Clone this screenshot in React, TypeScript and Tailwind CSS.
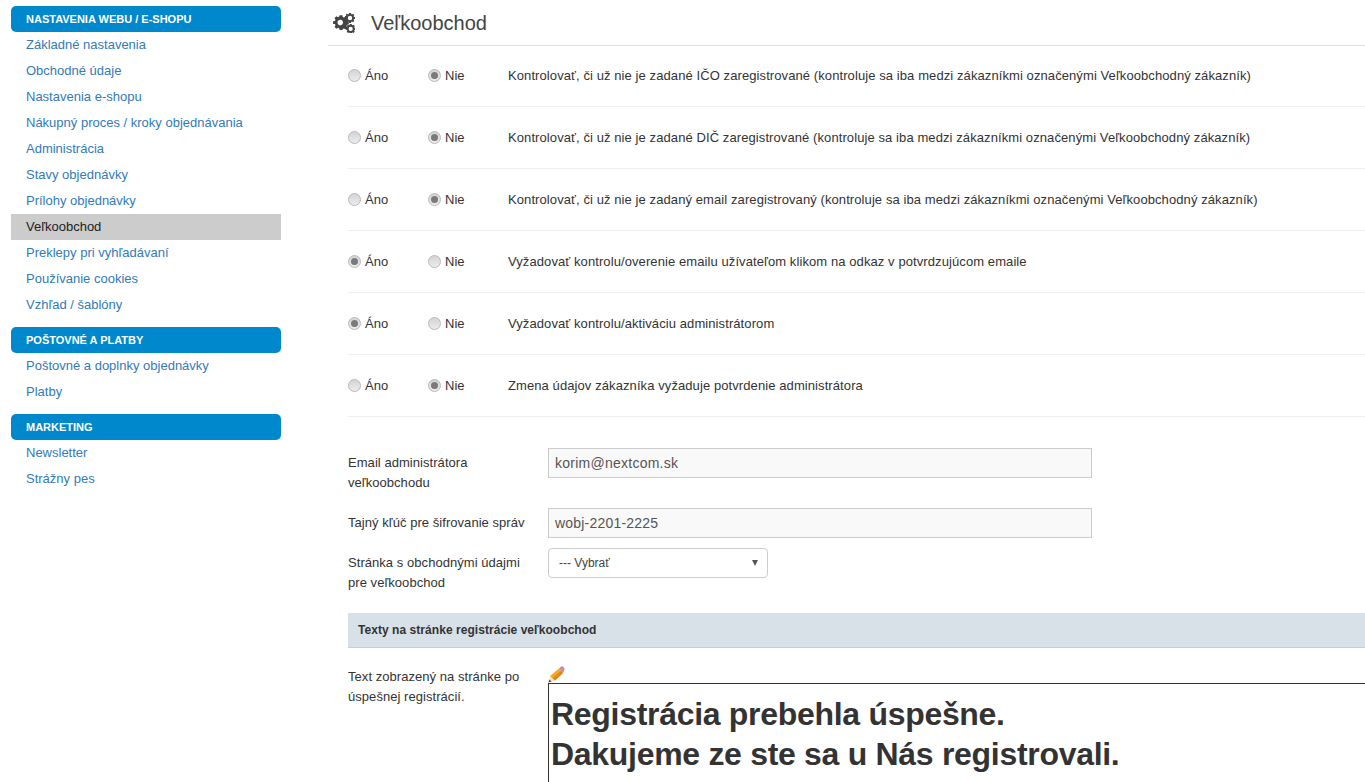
import React from "react";

const groups = [
  {
    title: "NASTAVENIA WEBU / E-SHOPU",
    items: [
      "Základné nastavenia",
      "Obchodné údaje",
      "Nastavenia e-shopu",
      "Nákupný proces / kroky objednávania",
      "Administrácia",
      "Stavy objednávky",
      "Prílohy objednávky",
      "Veľkoobchod",
      "Preklepy pri vyhľadávaní",
      "Používanie cookies",
      "Vzhľad / šablóny",
    ],
  },
  { title: "POŠTOVNÉ A PLATBY", items: ["Poštovné a doplnky objednávky", "Platby"] },
  { title: "MARKETING", items: ["Newsletter", "Strážny pes"] },
];

const rows = [
  { yes: false, text: "Kontrolovať, či už nie je zadané IČO zaregistrované (kontroluje sa iba medzi zákazníkmi označenými Veľkoobchodný zákazník)" },
  { yes: false, text: "Kontrolovať, či už nie je zadané DIČ zaregistrované (kontroluje sa iba medzi zákazníkmi označenými Veľkoobchodný zákazník)" },
  { yes: false, text: "Kontrolovať, či už nie je zadaný email zaregistrovaný (kontroluje sa iba medzi zákazníkmi označenými Veľkoobchodný zákazník)" },
  { yes: true, text: "Vyžadovať kontrolu/overenie emailu užívateľom klikom na odkaz v potvrdzujúcom emaile" },
  { yes: true, text: "Vyžadovať kontrolu/aktiváciu administrátorom" },
  { yes: false, text: "Zmena údajov zákazníka vyžaduje potvrdenie administrátora" },
];

function Radio({ on }: { on: boolean }) {
  return (
    <span className="w-[13px] h-[13px] rounded-full border border-[#b8b8b8] bg-gradient-to-b from-[#d4d4d4] to-[#ececec] flex items-center justify-center shrink-0">
      {on && <span className="w-[7px] h-[7px] rounded-full bg-[#7a7a7a]" />}
    </span>
  );
}

function Gears() {
  return (
    <svg width="22" height="20" viewBox="0 0 22 20" fill="#444444">
      <path
        fillRule="evenodd"
        d="M6 4h3l.4 1.9 1.3.6 1.7-1 2 2-1 1.7.6 1.4 1.9.4v2.9l-1.9.4-.6 1.4 1 1.7-2 2-1.7-1-1.3.5L9 20H6l-.4-1.9-1.3-.5-1.7 1-2-2 1-1.7-.6-1.4L-1 13.500V10.600l2-.4.6-1.4-1-1.700 2-2 1.700 1 1.300-.6zM7.500 9a3 3 0 100 5.800 3 3 0 000-5.800z"
        transform="translate(1 -1.500) scale(.93)"
      />
      <path
        fillRule="evenodd"
        d="M16 0h2l.2 1.100.8.300 1-.6 1.300 1.300-.6 1 .3.800 1 .2v1.800l-1 .2-.3.800.6 1-1.300 1.300-1-.6-.8.300-.2 1.100h-2l-.2-1.100-.8-.3-1 .6-1.300-1.300.6-1-.3-.8-1-.2V3.100l1-.2.3-.8-.6-1L14 .8l1 .6.800-.3zM17 2.800a2.200 2.200 0 100 4.400 2.200 2.200 0 000-4.400z"
      />
      <path
        fillRule="evenodd"
        d="M16.800 11h1.900l.2 1 .8.300.9-.5 1.200 1.300-.6.900.3.800 1 .2v1.700l-1 .2-.3.800.6.900-1.200 1.300-.9-.5-.8.300-.2 1H16.800l-.2-1-.8-.3-.9.5-1.200-1.300.6-.9-.3-.8-1-.2V15l1-.2.3-.8-.6-.9 1.200-1.300.9.500.8-.3zM17.700 13.800a2.100 2.100 0 100 4.200 2.100 2.100 0 000-4.200z"
      />
    </svg>
  );
}

function Pencil() {
  return (
    <svg width="17" height="17" viewBox="0 0 17 17">
      <path d="M0.500 16.500l1.500-6.500 5 4.500z" fill="#f6e6c4" />
      <path d="M0.500 16.500l.7-3 2.500 2z" fill="#555555" />
      <path d="M2 10L11 2.500l4 4.500L7 14.500z" fill="#f7a823" />
      <path d="M4.500 12.300L13 4.800l2 2.200L7 14.500z" fill="#e08a14" />
      <path d="M11 2.500L13 .6c.8-.5 1.500-.4 2.200.2l1 1.100c.6.7.6 1.400.1 2.100L15 7z" fill="#c98aa4" />
    </svg>
  );
}

export default function App() {
  return (
    <div className="h-[782px] overflow-hidden flex bg-white font-['Liberation_Sans',Arial,sans-serif] text-[13px] text-[#333333]">
      <aside className="w-[328px] shrink-0 pl-[11px] pr-[47px] pt-[6px]">
        {groups.map((g) => (
          <div key={g.title} className="mb-[9px]">
            <div className="h-[26px] rounded-[5px] bg-[#0088cc] text-white text-[11px] font-bold pl-[15px] leading-[26px]">
              {g.title}
            </div>
            {g.items.map((item) => (
              <div
                key={item}
                className={
                  item === "Veľkoobchod"
                    ? "h-[26px] leading-[26px] pl-[15px] bg-[#cccccc] text-[#222222]"
                    : "h-[26px] leading-[26px] pl-[15px] text-[#337ab7]"
                }
              >
                {item}
              </div>
            ))}
          </div>
        ))}
      </aside>

      <main className="flex-1 min-w-0">
        <header className="h-[46px] border-b border-[#dddddd] flex items-center pl-[5px] gap-[16px]">
          <Gears />
          <h1 className="text-[20px] text-[#444444] font-normal mt-[1px]">Veľkoobchod</h1>
        </header>

        <div className="pl-[20px] -mt-[1px]">
          {rows.map((r) => (
            <div key={r.text} className="h-[62px] border-b border-[#eeeeee] flex items-center whitespace-nowrap">
              <label className="w-[80px] flex items-center gap-[4px]">
                <Radio on={r.yes} />
                Áno
              </label>
              <label className="w-[80px] flex items-center gap-[4px]">
                <Radio on={!r.yes} />
                Nie
              </label>
              <span className="tracking-[0.09px]">{r.text}</span>
            </div>
          ))}

          <div className="mt-[31px] flex tracking-[0.05px]">
            <label className="w-[200px] leading-[20px] pt-[5px] pr-[20px]">Email administrátora veľkoobchodu</label>
            <div className="w-[544px] h-[30px] border border-[#cccccc] bg-[#f9f9f9] px-[6px] leading-[28px] text-[#555555] tracking-[0.25px] text-[14px]">
              korim@nextcom.sk
            </div>
          </div>

          <div className="mt-[15px] flex tracking-[0.05px]">
            <label className="w-[200px] leading-[20px] pt-[5px] whitespace-nowrap">Tajný kľúč pre šifrovanie správ</label>
            <div className="w-[544px] h-[30px] border border-[#cccccc] bg-[#f9f9f9] px-[6px] leading-[28px] text-[#555555] tracking-[0.2px] text-[14px]">
              wobj-2201-2225
            </div>
          </div>

          <div className="mt-[10px] flex tracking-[0.05px]">
            <label className="w-[200px] leading-[20px] pt-[5px] pr-[20px]">Stránka s obchodnými údajmi pre veľkoobchod</label>
            <div className="w-[220px] h-[30px] border border-[#cccccc] rounded-[4px] bg-white pl-[10px] pr-[9px] flex items-center justify-between text-[12px] tracking-normal text-[#444444]">
              --- Vybrať
              <span className="w-0 h-0 border-x-[3.5px] border-x-transparent border-t-[6px] border-t-[#555555]" />
            </div>
          </div>

          <div className="mt-[20px] h-[35px] bg-[#d9e1e8] border-b border-[#cccccc] pl-[10px] leading-[34px] text-[12px] font-bold tracking-[0.05px] text-[#333333]">
            Texty na stránke registrácie veľkoobchod
          </div>

          <div className="mt-[18px] flex">
            <label className="w-[200px] leading-[20px] pt-[1px] pr-[10px] tracking-[0.05px]">
              Text zobrazený na stránke po úspešnej registrácií.
            </label>
            <div className="flex-1 min-w-0">
              <div className="h-[17px] flex items-end">
                <Pencil />
              </div>
              <div className="border-t border-l border-[#333333] pl-[2px] pt-[10px] h-[200px] text-[32px] leading-[40px] font-bold tracking-[-0.3px] text-[#333333] whitespace-nowrap">
                <div>Registrácia prebehla úspešne.</div>
                <div>Dakujeme ze ste sa u Nás registrovali.</div>
              </div>
            </div>
          </div>
        </div>
      </main>
    </div>
  );
}
